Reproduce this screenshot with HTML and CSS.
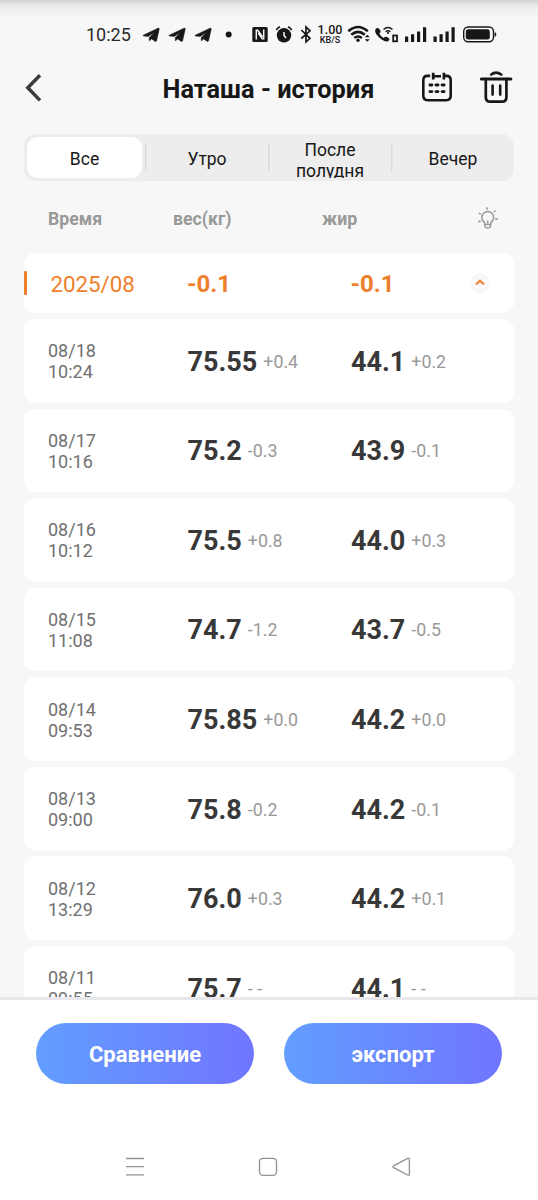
FILE: index.html
```html
<!DOCTYPE html>
<html lang="ru">
<head>
<meta charset="utf-8">
<title>Наташа - история</title>
<link rel="stylesheet" href="styles.css">
</head>
<body>
<div class="screen">
  <div class="status">
    <span class="clock">10:25</span>
    <svg class="notices" width="100" height="24" viewBox="140 22 100 24">
      <defs><path id="plane" d="M143.2 35.2L158 28.2Q159.5 27.8 159.2 29.2L156.6 40.8Q156.2 42 155 41.2L151.6 38.9L149.8 40.6Q149.2 41 149.2 40.2L149.3 37.6L154.300 32.400L148.200 36.5L143.5 35.9Q142.6 35.6 143.2 35.2Z" stroke="#171717" stroke-width=".5"/></defs>
      <use href="#plane"/><use href="#plane" x="26"/><use href="#plane" x="52"/>
      <circle cx="228.7" cy="34.5" r="3"/>
    </svg>
    <svg class="system" width="64" height="24" viewBox="250 22 64 24">
      <rect x="252.3" y="27" width="15.4" height="15" rx="1.500"/>
      <path d="M256.3 39.500V30.2H257.8L262.5 37M263.7 29.500V38.8H262.2L258.3 33" fill="none" stroke="#f7f7f7" stroke-width="1.5"/>
      <circle cx="284" cy="35.3" r="7.200"/>
      <path d="M276.3 30.2Q277.5 28 280 26.8M291.7 30.2Q290.5 28 288 26.8" fill="none" stroke="#171717" stroke-width="1.6"/>
      <path d="M284 32V35.5L286 38" fill="none" stroke="#f7f7f7" stroke-width="1.5"/>
      <path d="M301.3 30L310 38.3L306 41.8V27L310 30.8L301.3 38.5" fill="none" stroke="#171717" stroke-width="1.7"/>
    </svg>
    <span class="speed"><b>1.00</b><span>KB/S</span></span>
    <svg class="radio" width="152" height="24" viewBox="346 22 152 24">
      <g fill="none" stroke="#171717" stroke-width="2.500">
        <path d="M348.3 31.2Q358 22.8 367.8 31.2M351.3 34.7Q358 29 364.8 34.7M354.3 38Q358 35 361.8 38"/>
        <path d="M383.5 29.4Q388 25.4 392.5 29.4M385.6 31.8Q388 29.7 390.4 31.8" stroke-width="1.4"/>
        <rect x="393.2" y="35.500" width="3.8" height="5.800" stroke-width="1.8"/>
        <rect x="463.7" y="27" width="29.8" height="14.8" rx="4.5" stroke-width="1.4"/>
      </g>
      <circle cx="358" cy="40.3" r="1.7"/><circle cx="388" cy="33" r="1.1"/>
      <path d="M364.8 37.3L367.3 34.7L369.8 37.3ZM364.8 39.2L367.3 41.8L369.8 39.2Z"/>
      <path d="M376 28.5Q377.5 27.3 379 28.6L380.6 31Q381 32.2 379.3 33.6Q380.8 36.8 383.6 38Q385.2 36.2 386.6 36.8L389 38.3Q390 39.5 388.7 40.8Q386.5 42.7 381.6 39.4Q374.3 34 375.2 30Z"/>
      <path d="M405 36.500h3.200v5.4h-3.200zM411 34.200h3.200v7.700h-3.200zM417 31.5h3.200v10.4h-3.200zM423 27.2h3.200v14.7h-3.200zM433.5 36.500h3.200v5.4h-3.200zM439.5 34.200h3.200v7.700h-3.200zM445.5 31.5h3.200v10.4h-3.200zM451.5 27.2h3.200v14.7h-3.200z"/>
      <rect x="465.8" y="29.3" width="24" height="10.3" rx="2.4"/><path d="M494.7 32.3Q496.3 32.3 496.3 34.5Q496.3 36.7 494.7 36.7Z"/>
    </svg>
  </div>
  <header class="header">
    <svg class="back" width="20" height="30" viewBox="24 73 20 30"><path d="M40 75.2L27.8 87.8L40 100.4" fill="none" stroke="#3d3d3d" stroke-width="3.5"/></svg>
    <h1 class="title">Наташа - история</h1>
    <svg class="tools" width="94" height="38" viewBox="420 69 94 38">
      <g fill="none" stroke="#171717" stroke-width="2.6">
        <path d="M430.2 75.9H427.5Q423.3 75.9 423.3 80.2V95.8Q423.3 100.2 427.7 100.2H446.3Q450.7 100.2 450.7 95.8V80.2Q450.7 75.9 446.5 75.9H444.4M433.5 76.2H441"/>
        <path d="M433.2 72.8V79.6M443.9 72.8V79.6" stroke-width="2.7"/>
        <path d="M429.9 85h2M436 85h2M442.1 85h2M429.9 91.6h2M436 91.6h2M442.1 91.6h2" stroke-width="2.9" stroke-linecap="round"/>
        <path d="M481.4 79H510.8" stroke-width="3.2" stroke-linecap="round"/>
        <path d="M485.8 79V97Q485.8 101.7 490.2 101.7H502Q506.4 101.7 506.4 97V79M491.2 74.5Q496 70.8 501.2 74.5" stroke-width="2.7" stroke-linecap="round"/>
        <path d="M492.6 85.6V94.6M500.2 85.6V94.6" stroke-linecap="round"/>
      </g>
    </svg>
  </header>
  <nav class="tabs">
    <div class="tab active"><span>Все</span></div>
    <div class="tab"><span>Утро</span></div>
    <div class="tab double"><span>После полудня</span></div>
    <div class="tab"><span>Вечер</span></div>
  </nav>
  <div class="columns">
    <span class="col-time">Время</span><span class="col-weight">вес(кг)</span><span class="col-fat">жир</span>
    <svg width="24" height="26" viewBox="476 205 24 26" fill="none" stroke="#999" stroke-width="1.5">
      <path d="M484.6 224.4V222.6Q481.8 220.4 481.8 217.5A5.9 5.9 0 0 1 493.6 217.5Q493.6 220.4 490.8 222.6V224.4ZM485 225v1.5Q485.2 228 487.7 228T490.4 226.5V225M487.7 220.5v3M487.1 207.200V209.800M478.7 213.1L480.800 214.200M478.500 222L480.500 220.700M494 212.200L495.600 210.500M495 219H498"/>
    </svg>
  </div>
  <main class="list">
    <section class="month">
      <i class="marker"></i><span class="period">2025/08</span><b class="sum weight">-0.1</b><b class="sum fat">-0.1</b>
      <span class="toggle"><svg width="12" height="8" viewBox="0 0 12 8"><path d="M2 5.500L6 1.700L10 5.500" fill="none" stroke="#ee7f2d" stroke-width="2"/></svg></span>
    </section>
    <article class="row"><div class="date">08/18<br>10:24</div><div class="weight"><b>75.55</b><span>+0.4</span></div><div class="fat"><b>44.1</b><span>+0.2</span></div></article>
    <article class="row"><div class="date">08/17<br>10:16</div><div class="weight"><b>75.2</b><span>-0.3</span></div><div class="fat"><b>43.9</b><span>-0.1</span></div></article>
    <article class="row"><div class="date">08/16<br>10:12</div><div class="weight"><b>75.5</b><span>+0.8</span></div><div class="fat"><b>44.0</b><span>+0.3</span></div></article>
    <article class="row"><div class="date">08/15<br>11:08</div><div class="weight"><b>74.7</b><span>-1.2</span></div><div class="fat"><b>43.7</b><span>-0.5</span></div></article>
    <article class="row"><div class="date">08/14<br>09:53</div><div class="weight"><b>75.85</b><span>+0.0</span></div><div class="fat"><b>44.2</b><span>+0.0</span></div></article>
    <article class="row"><div class="date">08/13<br>09:00</div><div class="weight"><b>75.8</b><span>-0.2</span></div><div class="fat"><b>44.2</b><span>-0.1</span></div></article>
    <article class="row"><div class="date">08/12<br>13:29</div><div class="weight"><b>76.0</b><span>+0.3</span></div><div class="fat"><b>44.2</b><span>+0.1</span></div></article>
    <article class="row"><div class="date">08/11<br>09:55</div><div class="weight"><b>75.7</b><span>- -</span></div><div class="fat"><b>44.1</b><span>- -</span></div></article>
  </main>
  <footer class="footer">
    <div class="actions"><button>Сравнение</button><button>экспорт</button></div>
    <div class="system-nav">
      <svg width="20" height="20" viewBox="0 0 20 20"><path d="M1 1.500H19M1 9.700H19M1 17.800H19"/></svg>
      <svg width="20" height="20" viewBox="0 0 20 20"><rect x="1.500" y="1.300" width="17" height="17" rx="3.500"/></svg>
      <svg width="20" height="20" viewBox="0 0 20 20"><path d="M16.700 1.400Q18.400 .7 18.400 2.500V17Q18.400 18.700 16.700 18L2.600 10.700Q1.200 9.700 2.600 8.800Z"/></svg>
    </div>
  </footer>
</div>
</body>
</html>
```
FILE: styles.css
```css
* { box-sizing: border-box; }
body { margin: 0; font-family: Roboto, "Noto Sans", sans-serif; background: #f7f7f7; color: #171717; }
svg { display: block; flex: none; }
.screen { width: 538px; height: 1200px; display: flex; flex-direction: column; overflow: hidden; }

.status { height: 60px; flex: none; display: flex; align-items: flex-start; padding: 22px 0 0 86px; background: linear-gradient(#cfcfcf 0, #e5e5e5 4px, #efefef 9px, #f7f7f7 18px); }
.status svg { fill: #171717; }
.clock { width: 54px; font-size: 18px; line-height: 26px; color: #2a2a2a; }
.system { margin-left: 10px; }
.speed { width: 32px; display: flex; flex-direction: column; align-items: center; padding-top: 3px; line-height: 10px; font-size: 9px; font-weight: 500; }
.speed b { font-size: 12.500px; font-weight: 500; }

.header { height: 74px; flex: none; display: flex; align-items: flex-start; padding: 9px 24px 0; }
.back { margin-top: 4px; }
.title { margin: 0; flex: 1; padding: 0 0 0 118.500px; font-size: 25.350px; line-height: 40px; font-weight: 700; white-space: nowrap; }

.tabs { margin: 0 24px; height: 47px; flex: none; display: flex; padding: 3px 0 3px 3px; background: #ededed; border-radius: 12px; }
.tab { width: 123px; height: 41px; display: flex; align-items: center; justify-content: center; font-size: 17.500px; line-height: 21px; text-align: center; overflow: hidden; padding: 3px 0 0 1px; background: linear-gradient(#d9d9d9, #d9d9d9) left 7px / 1.500px 27px no-repeat; }
.tab.active { width: 115px; margin-right: 3px; padding-left: 0; background: #fff; border-radius: 11px; }
.tab.double { align-items: flex-start; padding: 3px 20px 0 21px; font-size: 17.500px; }

.columns { height: 72px; flex: none; display: flex; align-items: center; padding: 2px 38px 0 48px; font-size: 17.700px; font-weight: 700; color: #999; }
.columns span { padding-top: 1px; }
.col-time { width: 125px; }
.col-weight { width: 149px; }
.columns svg { margin-left: auto; }

.list { flex: 1; min-height: 0; overflow: hidden; display: flex; flex-direction: column; gap: 6px; padding: 0 24px; }
.month, .row { flex: none; display: grid; grid-template-columns: 139.500px 163.500px 1fr; align-items: center; background: #fff; border-radius: 11px; padding-left: 24px; }
.month { height: 60px; grid-template-columns: 3px 160px 163.500px 1fr auto; padding: 0 24px 0 0; color: #ee7f2d; }
.marker { width: 3px; height: 24px; border-radius: 1px; background: #ee7f2d; }
.period { padding: 1px 0 0 23.500px; font-size: 22.300px; }
.sum { font-size: 24px; padding-top: 2px; }
.toggle { width: 20px; height: 20px; display: grid; place-items: center; background: #f8f8fb; border-radius: 50%; }
.row { height: 83.570px; }
.date { font-size: 18px; line-height: 21px; padding-top: 1px; color: #707070; }
.row .weight, .row .fat { display: flex; align-items: center; gap: 6px; padding-top: 2px; }
.row b { font-size: 27px; color: #383838; line-height: 32px; }
.row span { font-size: 17.800px; color: #999; padding-bottom: 1px; }

.footer { height: 203px; flex: none; background: #fff; border-top: 3px solid #e7e7ec; padding: 23px 36px 0; }
.actions { display: flex; gap: 30px; }
.actions button { width: 218px; height: 61px; border: 0; border-radius: 31px; padding: 2px 0 0; color: #fff; font: 700 22px Roboto, sans-serif; background: linear-gradient(90deg, #629eff, #7075ff); }
.system-nav { display: flex; padding: 73px 0 0 89px; gap: 113px; }
.system-nav svg { fill: none; stroke: #929292; stroke-width: 1.300; }
```
